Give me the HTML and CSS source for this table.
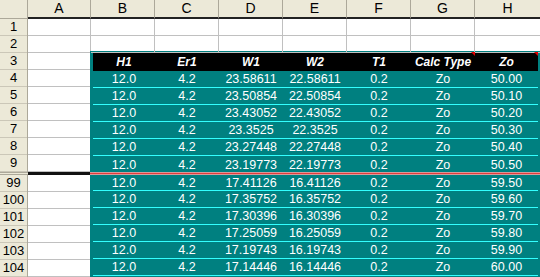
FILE: index.html
```html
<!DOCTYPE html>
<html lang="en">

<head>
    <meta charset="UTF-8">
    <title>Sheet1</title>
    <link rel="stylesheet" href="styles.css">
</head>

<body>
    <div class="sheet">
        <!-- Column headers -->
        <div class="colheads">
            <div class="corner"></div>
            <div class="a">A</div>
            <div>B</div>
            <div>C</div>
            <div>D</div>
            <div>E</div>
            <div>F</div>
            <div>G</div>
            <div class="last">H</div>
        </div>

        <!-- Top pane: rows 1-9 -->
        <div class="pane">
            <div class="rowheads">
                <div>1</div><div>2</div><div>3</div><div>4</div><div>5</div>
                <div>6</div><div>7</div><div>8</div><div>9</div>
            </div>
            <div class="col-a">
                <div></div><div></div><div></div><div></div><div></div>
                <div></div><div></div><div></div><div></div>
            </div>
            <div class="right">
                <div class="blank-row">
                    <div></div><div></div><div></div><div></div><div></div><div></div><div class="last"></div>
                </div>
                <div class="blank-row">
                    <div></div><div></div><div></div><div></div><div></div><div></div><div class="last"></div>
                </div>
                <div class="block top">
                    <div class="row head">
                        <span>H1</span><span>Er1</span><span>W1</span><span>W2</span><span>T1</span>
                        <span class="note">Calc Type</span><span class="note">Zo</span>
                    </div>
                    <div class="row"><span>12.0</span><span>4.2</span><span>23.58611</span><span>22.58611</span><span>0.2</span><span>Zo</span><span>50.00</span></div>
                    <div class="row"><span>12.0</span><span>4.2</span><span>23.50854</span><span>22.50854</span><span>0.2</span><span>Zo</span><span>50.10</span></div>
                    <div class="row"><span>12.0</span><span>4.2</span><span>23.43052</span><span>22.43052</span><span>0.2</span><span>Zo</span><span>50.20</span></div>
                    <div class="row"><span>12.0</span><span>4.2</span><span>23.3525</span><span>22.3525</span><span>0.2</span><span>Zo</span><span>50.30</span></div>
                    <div class="row"><span>12.0</span><span>4.2</span><span>23.27448</span><span>22.27448</span><span>0.2</span><span>Zo</span><span>50.40</span></div>
                    <div class="row end"><span>12.0</span><span>4.2</span><span>23.19773</span><span>22.19773</span><span>0.2</span><span>Zo</span><span>50.50</span></div>
                </div>
            </div>
        </div>

        <!-- Frozen split -->
        <div class="split">
            <div class="split-head"></div>
            <div class="split-a"></div>
            <div class="split-data"></div>
        </div>

        <!-- Bottom pane: rows 99-104 -->
        <div class="pane">
            <div class="rowheads">
                <div>99</div><div>100</div><div>101</div><div>102</div><div>103</div><div>104</div>
            </div>
            <div class="col-a">
                <div></div><div></div><div></div><div></div><div></div><div></div>
            </div>
            <div class="right">
                <div class="block bottom">
                    <div class="row"><span>12.0</span><span>4.2</span><span>17.41126</span><span>16.41126</span><span>0.2</span><span>Zo</span><span>59.50</span></div>
                    <div class="row"><span>12.0</span><span>4.2</span><span>17.35752</span><span>16.35752</span><span>0.2</span><span>Zo</span><span>59.60</span></div>
                    <div class="row"><span>12.0</span><span>4.2</span><span>17.30396</span><span>16.30396</span><span>0.2</span><span>Zo</span><span>59.70</span></div>
                    <div class="row"><span>12.0</span><span>4.2</span><span>17.25059</span><span>16.25059</span><span>0.2</span><span>Zo</span><span>59.80</span></div>
                    <div class="row"><span>12.0</span><span>4.2</span><span>17.19743</span><span>16.19743</span><span>0.2</span><span>Zo</span><span>59.90</span></div>
                    <div class="row"><span>12.0</span><span>4.2</span><span>17.14446</span><span>16.14446</span><span>0.2</span><span>Zo</span><span>60.00</span></div>
                </div>
            </div>
        </div>
    </div>
</body>

</html>
```

FILE: styles.css
```css
/* Reset */
* {
    margin: 0;
    padding: 0;
    box-sizing: border-box;
}

body {
    font-family: "Liberation Sans", Arial, sans-serif;
    background-color: #fff;
    color: #000;
    overflow: hidden;
}

.sheet {
    width: 540px;
    height: 277px;
    overflow: hidden;
}

/* Column headers */
.colheads {
    display: flex;
    height: 19px;
    background-color: #ece9d8;
}

.colheads div {
    width: 64px;
    border-right: 1px solid #aca899;
    border-bottom: 2px solid #222;
    text-align: center;
    font-size: 14px;
    line-height: 17px;
}

.colheads .corner {
    width: 28px;
    border-bottom: 1px solid #aca899;
}

.colheads .a {
    width: 63px;
}

.colheads .last {
    flex: 1;
    border-right: none;
}

/* Panes */
.pane {
    display: flex;
}

.rowheads {
    width: 28px;
    background-color: #ece9d8;
    border-right: 1px solid #aca899;
}

.rowheads div {
    height: 17px;
    border-bottom: 1px solid #cbc7b8;
    text-align: center;
    font-size: 13px;
    line-height: 16px;
}

.col-a {
    width: 63px;
}

.col-a div {
    height: 17px;
    border-right: 1px solid #c0c0c0;
    border-bottom: 1px solid #c0c0c0;
}

.right {
    flex: 1;
}

.blank-row {
    display: flex;
    height: 17px;
}

.blank-row div {
    width: 64px;
    border-right: 1px solid #c0c0c0;
    border-bottom: 1px solid #c0c0c0;
}

.blank-row .last {
    flex: 1;
    border-right: none;
}

/* Teal data block */
.block {
    background-color: #008080;
    color: #fff;
    margin-left: -1px;
    padding: 0 2px 0 3px;
    overflow: hidden;
}

.block.top {
    margin-top: -2px;
    padding-top: 2px;
    height: 121px;
}

.block.bottom {
    height: 102px;
}

.row {
    display: grid;
    grid-template-columns: 62px repeat(5, 64px) 1fr;
    align-items: center;
    height: 17px;
    border-bottom: 1px solid #3ff;
    text-align: center;
    font-size: 12.5px;
}

.block.bottom .row:first-child {
    height: 16px;
}

.row.end {
    border-bottom: none;
}

.row.head {
    height: 18px;
    background-color: #000;
    border-bottom: none;
    font-size: 12px;
    font-weight: bold;
    font-style: italic;
}

.row.head span {
    align-self: stretch;
    line-height: 18px;
}

/* Comment marker */
.note {
    position: relative;
}

.note::after {
    content: "";
    position: absolute;
    top: -1px;
    right: 0;
    border-top: 4px solid #e00000;
    border-left: 4px solid transparent;
}

/* Frozen split */
.split {
    display: flex;
    height: 3px;
}

.split-head {
    width: 28px;
    background-color: #ece9d8;
    border-top: 1px solid #aca899;
    border-bottom: 1px solid #aca899;
}

.split-a {
    width: 62px;
    background-color: #111;
}

.split-data {
    flex: 1;
    background-color: #e03c3c;
    border-top: 1px solid #d89a9a;
    border-bottom: 1px solid #d89a9a;
}
```
